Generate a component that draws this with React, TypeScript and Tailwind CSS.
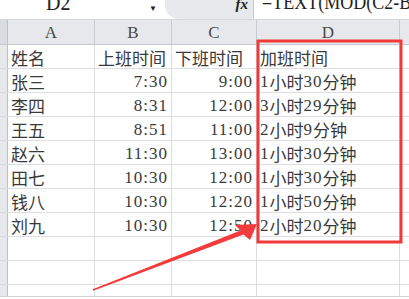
import React from "react";

const rows: string[][] = [
  ["姓名", "上班时间", "下班时间", "加班时间"],
  ["张三", "7:30", "9:00", "1小时30分钟"],
  ["李四", "8:31", "12:00", "3小时29分钟"],
  ["王五", "8:51", "11:00", "2小时9分钟"],
  ["赵六", "11:30", "13:00", "1小时30分钟"],
  ["田七", "10:30", "12:00", "1小时30分钟"],
  ["钱八", "10:30", "12:20", "1小时50分钟"],
  ["刘九", "10:30", "12:50", "2小时20分钟"],
  ["", "", "", ""],
  ["", "", "", ""],
];

const colW = ["w-[87px]", "w-[77px]", "w-[85px]", "w-[143px]"];

// digits and colons use a serif face, the rest the CJK face
function Txt({ s }: { s: string }) {
  const parts = s.split(/([0-9:]+)/).filter(Boolean);
  return (
    <>
      {parts.map((p, i) =>
        /^[0-9:]+$/.test(p) ? (
          <span key={i} className="font-['Liberation_Serif',serif] tracking-[1px]">
            {p}
          </span>
        ) : (
          <span key={i} className="font-['Noto_Sans_CJK_SC',sans-serif]">
            {p}
          </span>
        )
      )}
    </>
  );
}

function DataRow({ cells, first }: { cells: string[]; first: boolean }) {
  const isTime = (v: string) => /^[0-9]+:[0-9]+$/.test(v);
  return (
    <div className="flex h-[24px] shrink-0 border-b border-[#dcdee2]">
      <div className="w-[8px] shrink-0 bg-[#e6e8eb] border-r border-[#bcc1c8]" />
      {cells.map((c, i) => {
        const right = !first && isTime(c);
        return (
          <div
            key={i}
            className={`${colW[i]} shrink-0 border-r border-[#dcdee2] flex items-end pb-[1px] whitespace-nowrap text-[17px] leading-[18px] text-[#3a3a3a] ${
              right ? "justify-end pr-[3px]" : "pl-[3px]"
            }`}
          >
            <Txt s={c} />
          </div>
        );
      })}
      <div className="flex-1" />
    </div>
  );
}

export default function App() {
  return (
    <div className="relative w-[409px] h-[299px] overflow-hidden bg-white">
      {/* formula bar */}
      <div className="flex h-[20px] overflow-hidden border-b border-[#d3d6db] bg-white text-[#222]">
        <div className="w-[140px] shrink-0 pl-[46px] font-['Liberation_Serif',serif] text-[20px] leading-[20px] -mt-[6px] scale-y-[1.15] origin-bottom">
          D2
        </div>
        <div className="w-[25px] shrink-0 flex justify-start pl-[9px] pt-[4px] text-[8px] leading-[8px]">
          ▼
        </div>
        <div className="w-[89px] shrink-0 bg-[#e7e9ec] rounded-bl-[14px] border-r border-[#c9ccd1] flex justify-end pr-[5px]">
          <span className="font-['Liberation_Serif',serif] italic font-bold text-[15px] leading-[15px] -mt-[3px]">
            fx
          </span>
        </div>
        <div className="pl-[8px] whitespace-nowrap font-['Liberation_Serif',serif] text-[18px] leading-[18px] -mt-[4px] scale-y-[1.2] origin-bottom">
          =TEXT(MOD(C2-B
        </div>
      </div>

      {/* column headers */}
      <div className="flex h-[25px] border-b border-[#c4c8ce] bg-[#e6e8eb] text-[#4a4a4a]">
        <div className="w-[8px] shrink-0 bg-[#d9dce0] border-r border-[#bcc1c8]" />
        {["A", "B", "C", "D"].map((l, i) => (
          <div
            key={l}
            className={`${colW[i]} shrink-0 border-r border-[#c9ccd2] flex items-center justify-center font-['Liberation_Serif',serif] text-[17px] leading-none`}
          >
            {l}
          </div>
        ))}
        <div className="flex-1" />
      </div>

      {/* sheet body */}
      <div className="flex flex-col">
        {rows.map((r, i) => (
          <DataRow key={i} cells={r} first={i === 0} />
        ))}
        <div className="flex h-[12px] shrink-0 border-b border-[#cfd2d6]">
          <div className="w-[8px] shrink-0 bg-[#e6e8eb] border-r border-[#bcc1c8]" />
          {colW.map((w) => (
            <div key={w} className={`${w} shrink-0 border-r border-[#dcdee2]`} />
          ))}
        </div>
      </div>

      {/* red highlight box and arrow */}
      <svg className="absolute inset-0 pointer-events-none" width="409" height="299" viewBox="0 0 409 299">
        <rect x="258" y="41" width="143" height="201" fill="none" stroke="#f03a3a" strokeWidth="3" />
        <polygon
          fill="#f23b3b"
          points="92.7,289.3 240.5,230.5 235,225 257,224 250,240 243.5,234.5 93.3,290.7"
        />
      </svg>
    </div>
  );
}
